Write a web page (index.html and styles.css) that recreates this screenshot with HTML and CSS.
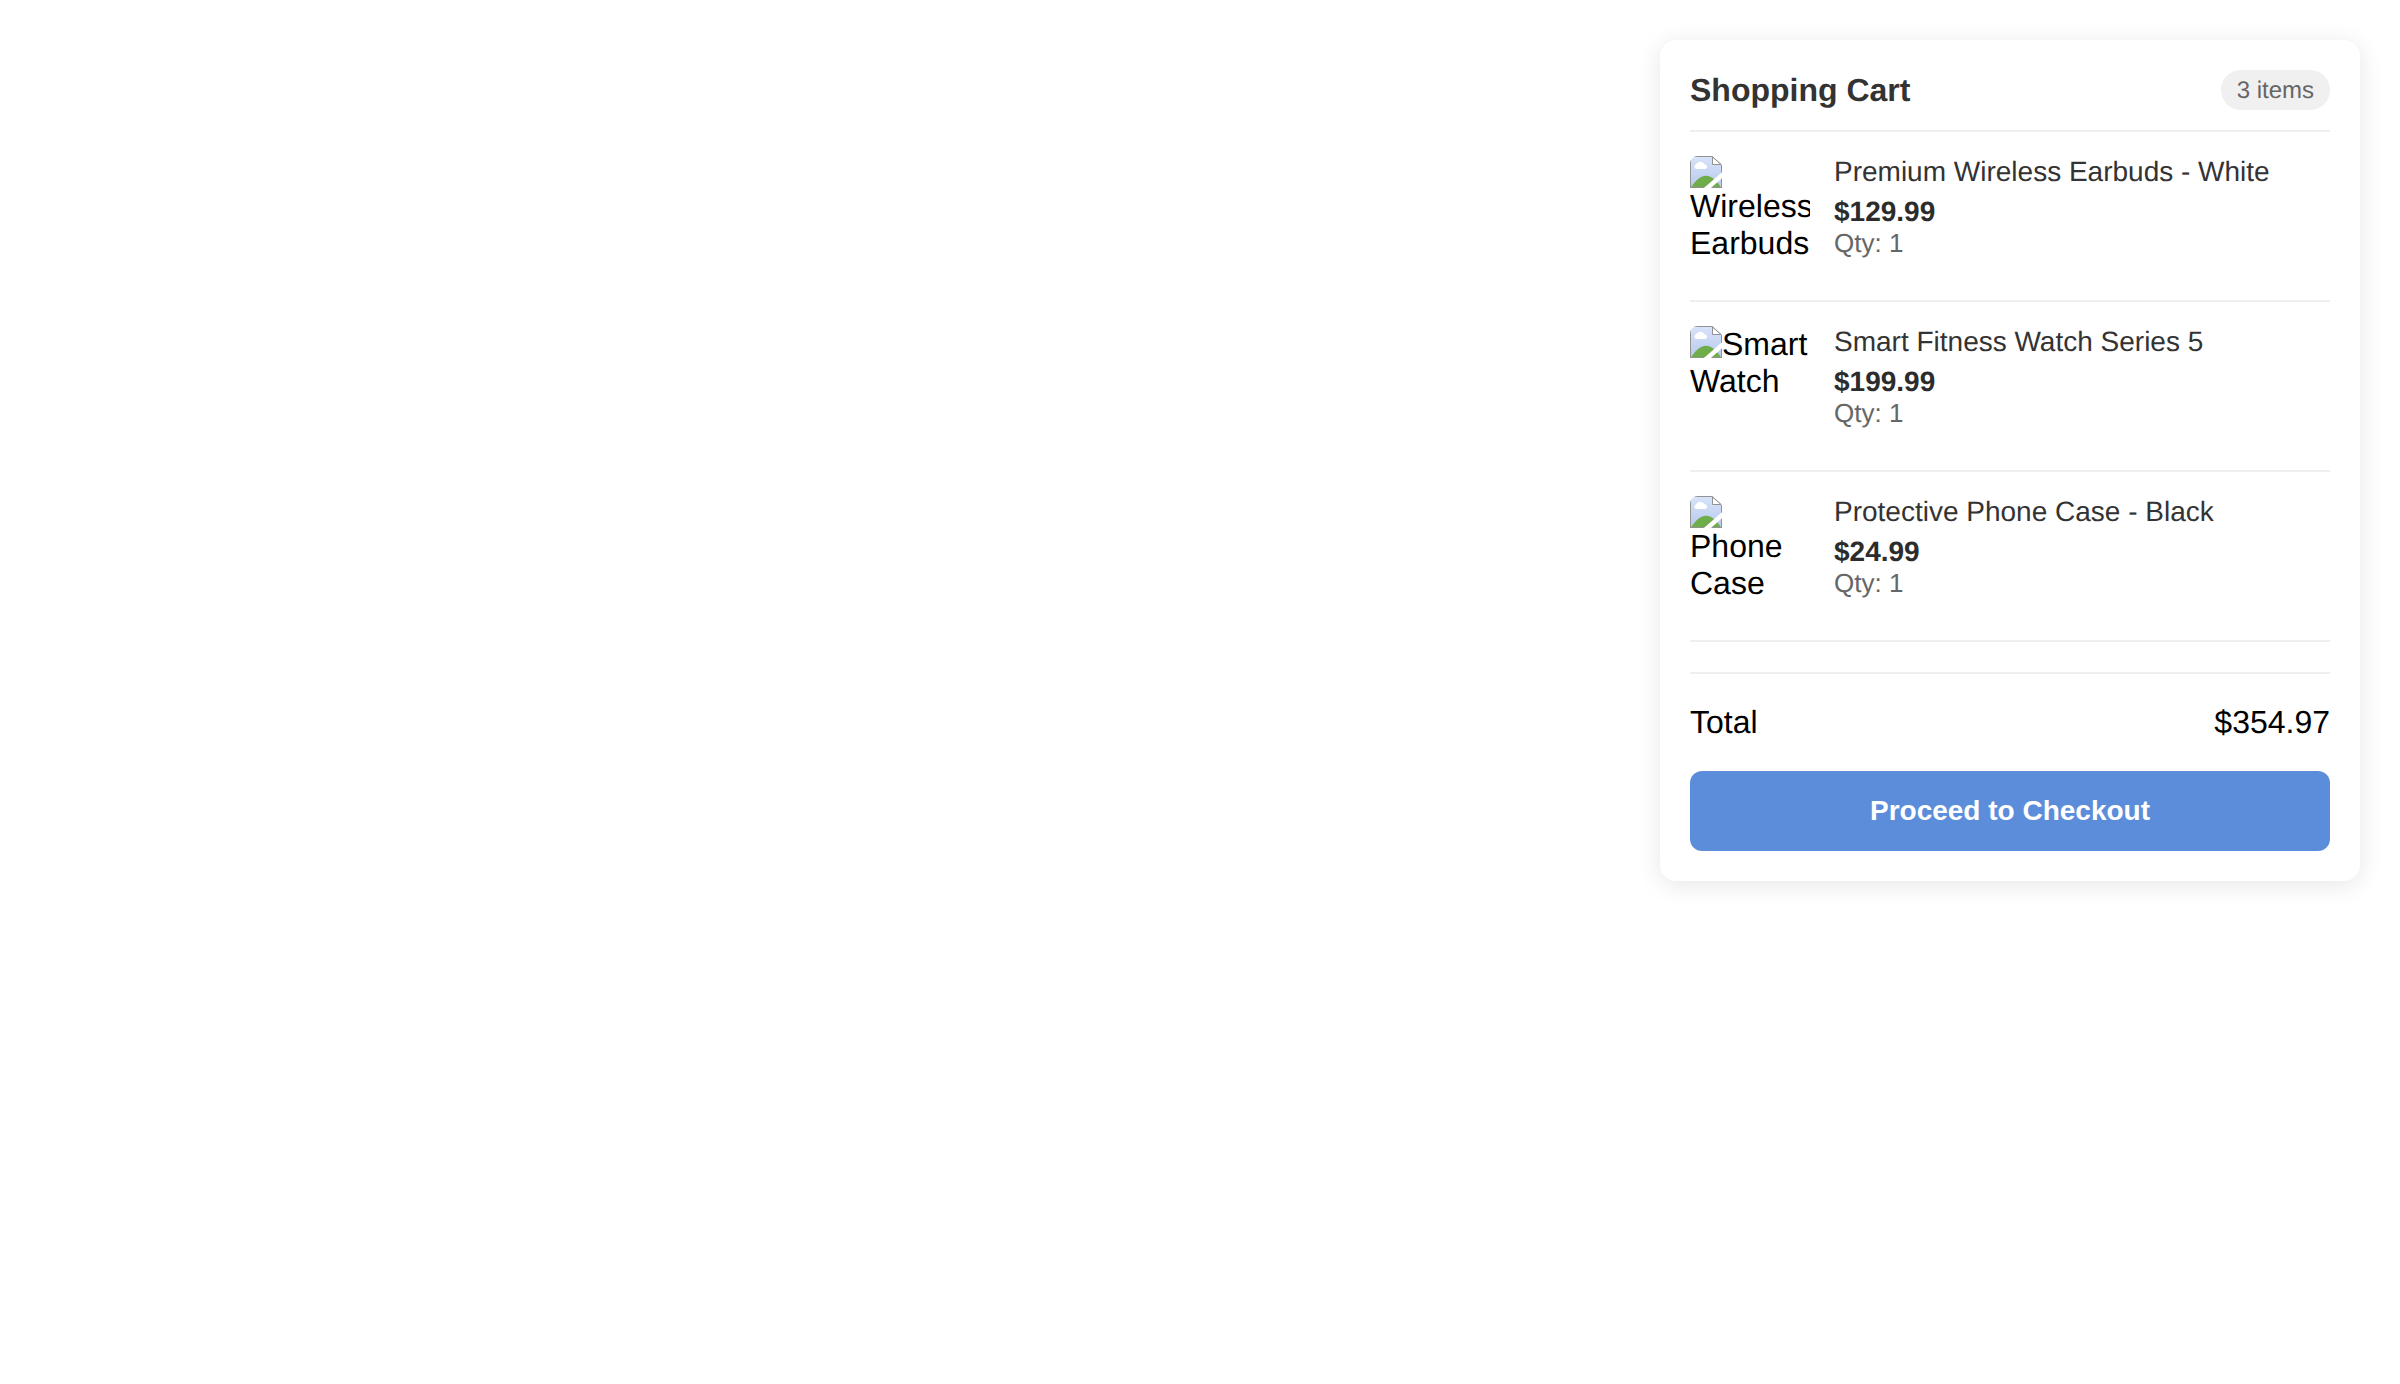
FILE: index.html
```html
<!DOCTYPE html>
<html lang="en">
<head>
<meta charset="utf-8">
<title>Shopping Cart</title>
<link rel="stylesheet" href="styles.css">
</head>
<body>
<svg class="defs" aria-hidden="true">
  <symbol id="missing" viewBox="0 0 32 32">
    <linearGradient id="sky" x1="0" y1="0" x2="0" y2="1"><stop offset="0" stop-color="#d8e4fa"/><stop offset="1" stop-color="#b8c9ee"/></linearGradient>
    <path d="M0 0H22.5L32 9V32H0Z" fill="url(#sky)"/>
    <path d="M1 31.5C5 25 10 19.8 16 19.8S27 25 31 31.5Z" fill="#6fac4a"/>
    <path d="M6 13A2.6 2.6 0 0 1 6 8.2 5 5 0 0 1 14.5 8.2 2.5 2.5 0 0 1 15.5 13Z" fill="#fff"/>
    <path d="M.5 32V.5H22.3L31.5 9V32M0 31.5H32" fill="none" stroke="#929292"/>
    <path d="M22.5 1V8.5H31Z" fill="#fff" stroke="#929292"/>
    <path d="M13.3 32.5L32.5 15.7V21.7L20.3 32.5Z" fill="#fff"/>
  </symbol>
</svg>
<main class="cart">
  <header class="cart-header">
    <h2 class="cart-title">Shopping Cart</h2>
    <span class="cart-count">3 items</span>
  </header>
  <div class="item">
    <div class="thumb"><svg class="missing"><use href="#missing"/></svg>Wireless Earbuds</div>
    <div class="details">
      <div class="name">Premium Wireless Earbuds - White</div>
      <div class="price">$129.99</div>
      <div class="qty">Qty: 1</div>
    </div>
  </div>
  <div class="item">
    <div class="thumb"><svg class="missing"><use href="#missing"/></svg>Smart Watch</div>
    <div class="details">
      <div class="name">Smart Fitness Watch Series 5</div>
      <div class="price">$199.99</div>
      <div class="qty">Qty: 1</div>
    </div>
  </div>
  <div class="item">
    <div class="thumb"><svg class="missing"><use href="#missing"/></svg>Phone Case</div>
    <div class="details">
      <div class="name">Protective Phone Case - Black</div>
      <div class="price">$24.99</div>
      <div class="qty">Qty: 1</div>
    </div>
  </div>
  <div class="total"><span>Total</span><span>$354.97</span></div>
  <button class="checkout">Proceed to Checkout</button>
</main>
</body>
</html>
```
FILE: styles.css
```css
* { box-sizing: border-box; }
body {
  margin: 0;
  padding: 40px;
  background: #fff;
  color: #000;
  font: 32px/37px "Liberation Sans", Arial, sans-serif;
  text-rendering: geometricPrecision;
}
.defs { display: block; width: 0; height: 0; }
.cart {
  width: 700px;
  margin-left: auto;
  padding: 30px;
  border-radius: 16px;
  background: #fff;
  box-shadow: 0 4px 24px rgba(0, 0, 0, 0.1);
}
.cart-header {
  display: flex;
  justify-content: space-between;
  align-items: center;
  height: 62px;
  padding-bottom: 20px;
  border-bottom: 2px solid #eee;
}
.cart-title { margin: 0; font-size: 32px; color: #333; }
.cart-count {
  padding: 7px 16px 5px;
  border-radius: 24px;
  background: #f0f0f0;
  color: #666;
  font-size: 24px;
  line-height: 28px;
}
.item {
  display: flex;
  gap: 24px;
  padding: 24px 0;
  border-bottom: 2px solid #eee;
}
.thumb {
  flex: none;
  width: 120px;
  height: 120px;
  border-radius: 8px;
  overflow: hidden;
}
.missing { float: left; width: 32px; height: 32px; }
.details { flex: 1; font-size: 28px; line-height: 32px; }
.name { margin-bottom: 8px; color: #333; }
.price { font-weight: bold; color: #2c2c2c; }
.qty { font-size: 26px; line-height: 30px; color: #666; }
.total {
  display: flex;
  justify-content: space-between;
  margin: 30px 0;
  padding-top: 30px;
  border-top: 2px solid #eee;
}
.checkout {
  display: block;
  width: 100%;
  height: 80px;
  padding: 0;
  border: 0;
  border-radius: 12px;
  background: #5c8ddb;
  color: #fff;
  font: bold 28px/32px "Liberation Sans", Arial, sans-serif;
}
```
